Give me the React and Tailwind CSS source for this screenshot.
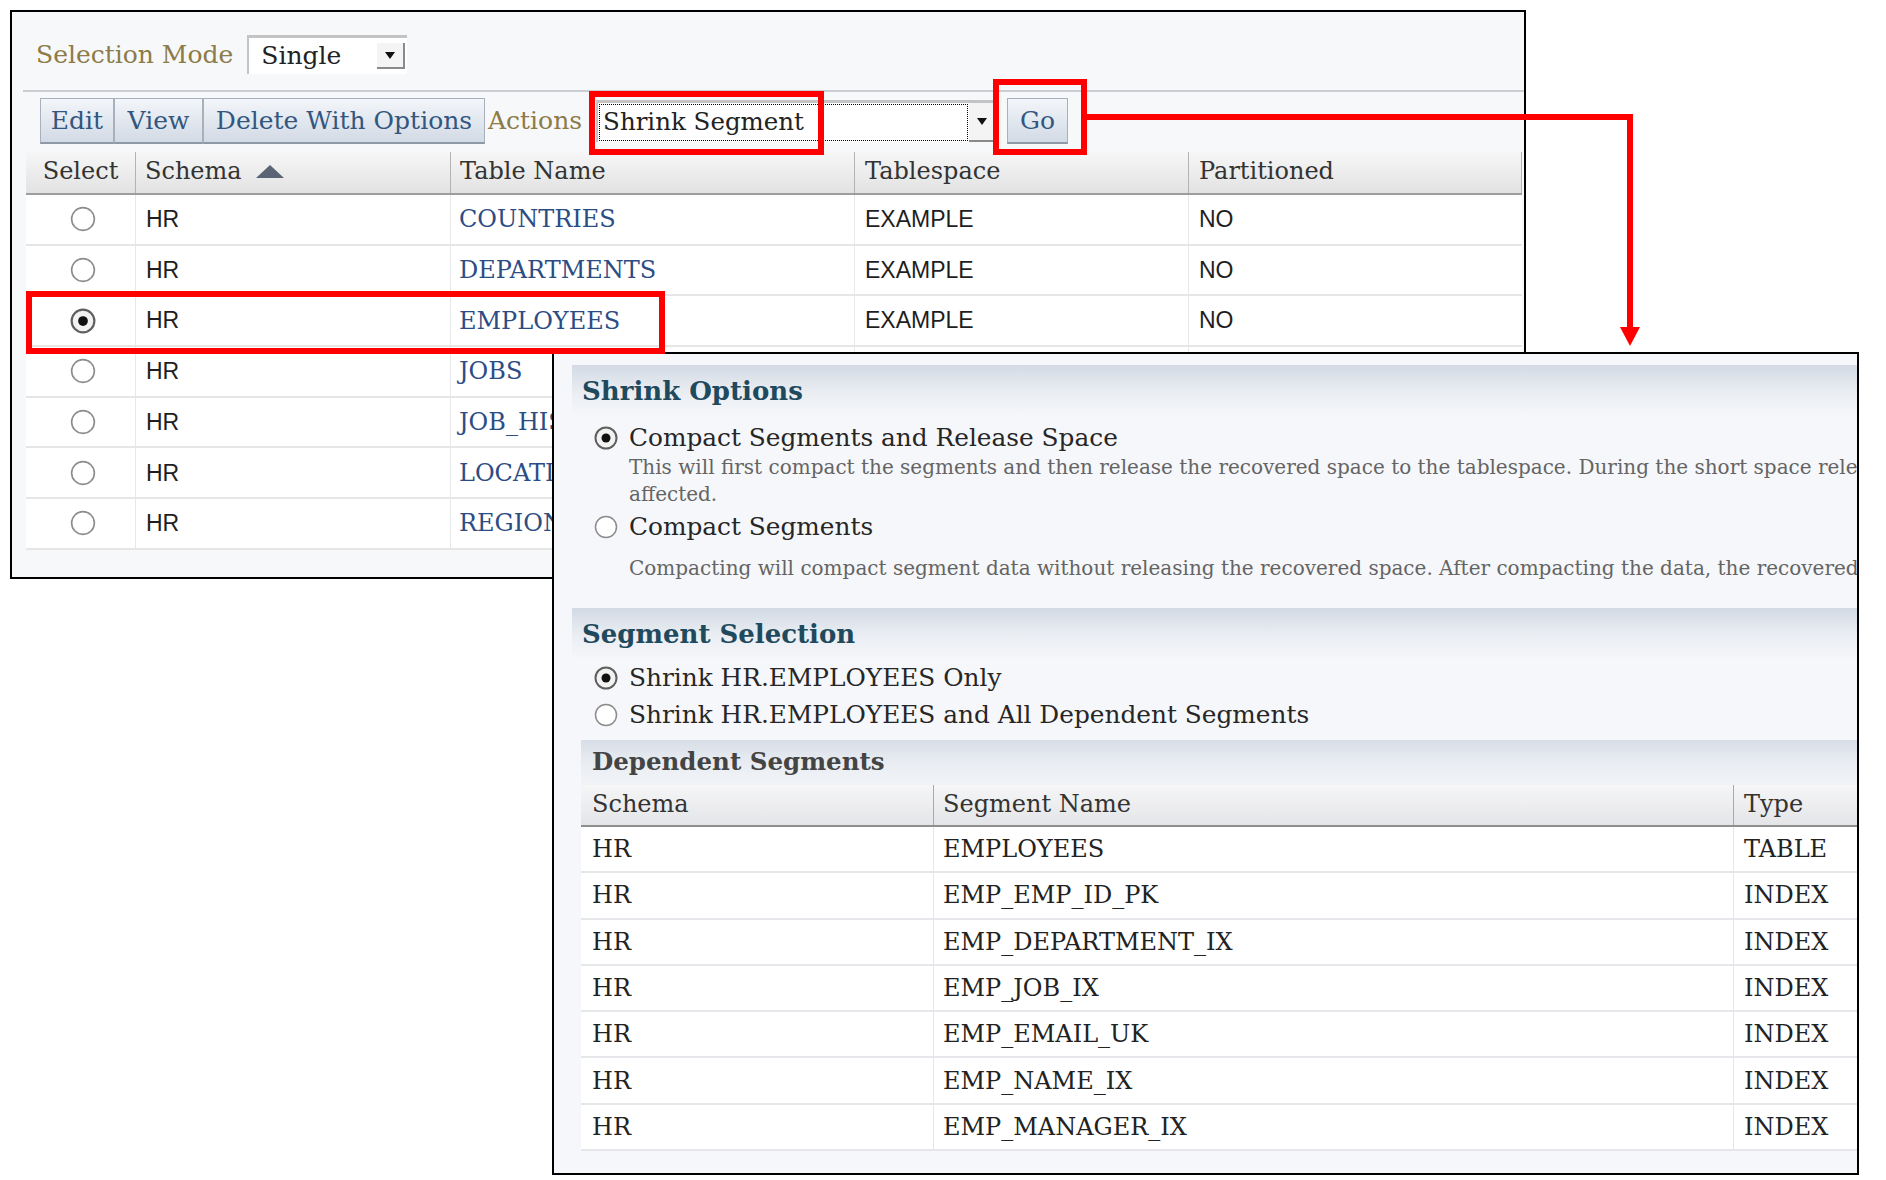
import React from 'react';

const linkRows = [
  { name: 'COUNTRIES', space: 'EXAMPLE', part: 'NO' },
  { name: 'DEPARTMENTS', space: 'EXAMPLE', part: 'NO' },
  { name: 'EMPLOYEES', space: 'EXAMPLE', part: 'NO', on: true },
  { name: 'JOBS', space: 'EXAMPLE', part: 'NO' },
  { name: 'JOB_HISTORY', space: 'EXAMPLE', part: 'NO' },
  { name: 'LOCATIONS', space: 'EXAMPLE', part: 'NO' },
  { name: 'REGIONS', space: 'EXAMPLE', part: 'NO' },
];

const segments = [
  ['HR', 'EMPLOYEES', 'TABLE'],
  ['HR', 'EMP_EMP_ID_PK', 'INDEX'],
  ['HR', 'EMP_DEPARTMENT_IX', 'INDEX'],
  ['HR', 'EMP_JOB_IX', 'INDEX'],
  ['HR', 'EMP_EMAIL_UK', 'INDEX'],
  ['HR', 'EMP_NAME_IX', 'INDEX'],
  ['HR', 'EMP_MANAGER_IX', 'INDEX'],
];

function Radio({ on, size = 24 }) {
  return (
    <svg width={size} height={size} viewBox="0 0 24 24" className="shrink-0">
      <circle
        cx="12"
        cy="12"
        r="10.5"
        fill={on ? '#f2f2f2' : '#ffffff'}
        stroke={on ? '#5f5f5f' : '#8c8c8c'}
        strokeWidth={on ? 2 : 1.5}
      />
      {on && <circle cx="12" cy="12" r="4.5" fill="#111111" />}
    </svg>
  );
}

function DropArrow() {
  return (
    <div className="w-[28px] h-full flex items-center justify-center border-r-2 border-b-2 border-[#8a8a8a] bg-[#f4f4f4]">
      <svg width="10" height="7" viewBox="0 0 10 7">
        <polygon points="0,0 10,0 5,7" fill="#111" />
      </svg>
    </div>
  );
}

function ToolButton({ children, w }) {
  return (
    <div
      className="h-full flex items-center justify-center border border-[#a7b0bc] border-b-2 border-b-[#8f99a6] bg-gradient-to-b from-[#f3f6fa] to-[#d2dae5] text-[25px] text-[#33567f]"
      style={{ width: w }}
    >
      {children}
    </div>
  );
}

function Band({ title }) {
  return (
    <div className="ml-[18px] h-[52px] flex items-center pl-[10px] bg-gradient-to-b from-[#d3dae5] via-[#e9edf2] to-[#f6f7fa]">
      <span className="text-[26px] font-bold text-[#1f4a5e]">{title}</span>
    </div>
  );
}

function Option({ on, children }) {
  return (
    <div className="flex items-center gap-[11px] h-[30px] ml-[40px]">
      <Radio on={on} />
      <span className="text-[24.8px] text-[#262626] whitespace-nowrap">{children}</span>
    </div>
  );
}

export default function App() {
  return (
    <div className="relative w-[1886px] h-[1180px] bg-white overflow-hidden font-['DejaVu_Serif',serif]">
      {/* tables window */}
      <div className="absolute left-[10px] top-[10px] w-[1516px] h-[569px] border-2 border-black bg-[#f7f8fa]">
        <div className="flex items-center h-[39px] mt-[23px] ml-[24px]">
          <span className="text-[25px] text-[#8d7b48]">Selection Mode</span>
          <div className="ml-[14px] w-[160px] h-full flex items-stretch bg-white border-t-[3px] border-l-2 border-[#c4c4c4]">
            <span className="flex-1 pl-[12px] flex items-center text-[25px] text-[#222]">Single</span>
            <div className="py-[5px] pr-[2px]">
              <DropArrow />
            </div>
          </div>
        </div>
        <div className="h-[2px] bg-[#cacdd1] ml-[11px] mt-[16px]" />
        <div className="flex items-center h-[46px] mt-[6px] ml-[28px]">
          <ToolButton w={74}>Edit</ToolButton>
          <ToolButton w={89}>View</ToolButton>
          <ToolButton w={282}>Delete With Options</ToolButton>
          <span className="ml-[3px] text-[25px] text-[#8d7b48]">Actions</span>
          <div className="ml-[14px] w-[402px] h-[42px] flex items-stretch bg-white border-t-[3px] border-l-2 border-[#c4c4c4]">
            <div className="flex-1 flex items-center border border-dotted border-black pl-[3px] text-[24.5px] text-[#222] m-[1px]">
              Shrink Segment
            </div>
            <div className="pr-[1px]">
              <DropArrow />
            </div>
          </div>
          <div className="ml-[9px]">
            <div className="w-[61px] h-[46px] flex items-center justify-center border border-[#a7b0bc] border-b-2 border-b-[#8f99a6] bg-gradient-to-b from-[#f3f6fa] to-[#d2dae5] text-[25px] text-[#33567f]">
              Go
            </div>
          </div>
        </div>

        <div className="mt-[8px] ml-[14px] w-[1496px]">
          <div className="flex h-[43px] bg-gradient-to-b from-[#f7f7f7] to-[#e2e2e2] border-b-2 border-[#9e9e9e] text-[24px] text-[#333]">
            <div className="w-[109px] flex items-center justify-center pb-[3px]">Select</div>
            <div className="w-[315px] flex items-center pl-[9px] pb-[3px] border-l border-[#b3b3b3]">
              Schema
              <svg width="28" height="13" viewBox="0 0 28 13" className="ml-[14px]">
                <polygon points="0,13 14,0 28,13" fill="#5b6474" />
              </svg>
            </div>
            <div className="w-[404px] flex items-center pl-[9px] pb-[3px] border-l border-[#b3b3b3]">Table Name</div>
            <div className="w-[334px] flex items-center pl-[10px] pb-[3px] border-l border-[#b3b3b3]">Tablespace</div>
            <div className="w-[334px] flex items-center pl-[10px] pb-[3px] border-l border-r border-[#b3b3b3]">Partitioned</div>
          </div>
          {linkRows.map((r) => (
            <div key={r.name} className="flex h-[50.7px] bg-white border-b-2 border-[#e6e6e6]">
              <div className="w-[109px] flex items-center justify-center pl-[5px]">
                <Radio on={r.on} size={26} />
              </div>
              <div className="w-[315px] flex items-center pl-[10px] border-l border-[#e8e8e8] font-['Liberation_Sans',sans-serif] text-[23px] text-[#1e1e1e]">
                HR
              </div>
              <div className="w-[404px] flex items-center pl-[8px] border-l border-[#e8e8e8] text-[24px] text-[#2c4d84]">
                {r.name}
              </div>
              <div className="w-[334px] flex items-center pl-[10px] border-l border-[#e8e8e8] font-['Liberation_Sans',sans-serif] text-[23px] text-[#1e1e1e]">
                {r.space}
              </div>
              <div className="w-[334px] flex items-center pl-[10px] border-l border-[#e8e8e8] font-['Liberation_Sans',sans-serif] text-[23px] text-[#1e1e1e]">
                {r.part}
              </div>
            </div>
          ))}
        </div>
      </div>

      {/* shrink window */}
      <div className="absolute left-[552px] top-[352px] w-[1307px] h-[823px] border-2 border-black bg-[#f6f7fa] overflow-hidden">
        <div className="mt-[11px]">
          <Band title="Shrink Options" />
        </div>
        <div className="mt-[6px]">
          <Option on>Compact Segments and Release Space</Option>
        </div>
        <div className="mt-[1px] ml-[75px] text-[20px] leading-[27px] text-[#646464] whitespace-nowrap">
          <div>
            This will first compact the segments and then release the recovered space to the tablespace. During the short space release phase, cursors on the segment may be invalidated and queries could be
          </div>
          <div>affected.</div>
        </div>
        <div className="mt-[4px]">
          <Option>Compact Segments</Option>
        </div>
        <div className="mt-[13px] ml-[75px] text-[20px] leading-[27px] text-[#646464] whitespace-nowrap">
          Compacting will compact segment data without releasing the recovered space. After compacting the data, the recovered space can be released later.
        </div>
        <div className="mt-[26px]">
          <Band title="Segment Selection" />
        </div>
        <div className="mt-[3px]">
          <Option on>Shrink HR.EMPLOYEES Only</Option>
        </div>
        <div className="mt-[7px]">
          <Option>Shrink HR.EMPLOYEES and All Dependent Segments</Option>
        </div>
        <div className="mt-[10px] ml-[27px] h-[45px] flex items-center pl-[11px] bg-gradient-to-b from-[#d8dee7] via-[#e9edf2] to-[#f1f3f6]">
          <span className="text-[24.5px] font-bold text-[#444]">Dependent Segments</span>
        </div>
        <div className="ml-[27px] w-[1452px]">
          <div className="flex h-[42px] bg-gradient-to-b from-[#f6f6f7] to-[#e4e5e8] border-b-2 border-[#8f8f8f] text-[24px] text-[#333]">
            <div className="w-[352px] flex items-center pl-[11px] pb-[2px]">Schema</div>
            <div className="w-[800px] flex items-center pl-[9px] pb-[2px] border-l border-[#a9a9a9]">Segment Name</div>
            <div className="w-[300px] flex items-center pl-[10px] pb-[2px] border-l border-[#a9a9a9]">Type</div>
          </div>
          {segments.map((s) => (
            <div key={s[1]} className="flex h-[46.3px] bg-white border-b-2 border-[#e6e7ea] text-[24px] text-[#222]">
              <div className="w-[352px] flex items-center pl-[11px]">{s[0]}</div>
              <div className="w-[800px] flex items-center pl-[9px] border-l border-[#e6e6e6]">{s[1]}</div>
              <div className="w-[300px] flex items-center pl-[10px] border-l border-[#e6e6e6]">{s[2]}</div>
            </div>
          ))}
        </div>
      </div>

      {/* callouts */}
      <div className="absolute left-[589px] top-[91px] w-[235px] h-[64px] border-[6px] border-[#ff0000]" />
      <div className="absolute left-[993px] top-[79px] w-[94px] h-[76px] border-[6px] border-[#ff0000]" />
      <div className="absolute left-[26px] top-[291px] w-[639px] h-[63px] border-[6px] border-[#ff0000]" />
      <div className="absolute left-[1086px] top-[114px] w-[547px] h-[6px] bg-[#ff0000]" />
      <div className="absolute left-[1627px] top-[114px] w-[6px] h-[215px] bg-[#ff0000]" />
      <svg className="absolute left-[1620px] top-[327px]" width="20" height="19" viewBox="0 0 20 19">
        <polygon points="0,0 20,0 10,19" fill="#ff0000" />
      </svg>
    </div>
  );
}
